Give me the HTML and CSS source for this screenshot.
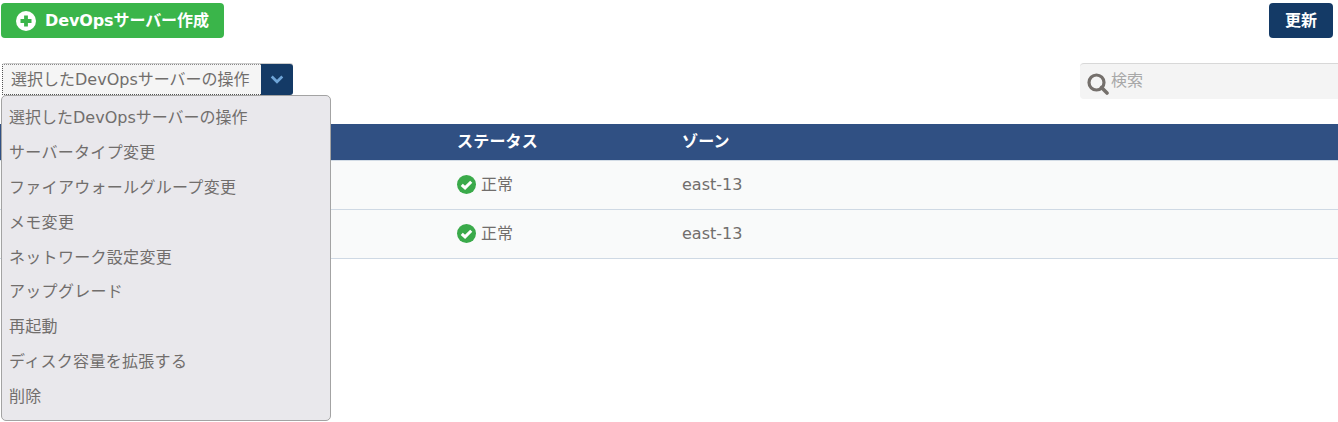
FILE: index.html
```html
<!DOCTYPE html>
<html lang="ja">
<head>
<meta charset="utf-8">
<title>DevOpsサーバー</title>
<link rel="stylesheet" href="styles.css">
</head>
<body>
<div class="toolbar">
  <button class="btn btn-create">
    <svg class="plus-icon" viewBox="0 0 20 20" width="20" height="20"><circle cx="10" cy="10" r="10" fill="#fff"/><path d="M10 4.500v11M4.500 10h11" stroke="#3ab54a" stroke-width="3.800"/></svg>
    <span class="create-label">DevOpsサーバー作成</span>
  </button>
  <button class="btn btn-refresh"><span>更新</span></button>
</div>
<div class="actions">
  <div class="select">
    <div class="select-label">選択したDevOpsサーバーの操作</div>
    <div class="select-arrow">
      <svg viewBox="0 0 12 8" width="14" height="9"><path d="M1.300 1.300 6 6l4.700-4.700" fill="none" stroke="#6fa5d8" stroke-width="2.400"/></svg>
    </div>
  </div>
  <div class="search">
    <svg viewBox="0 0 22 22" width="22" height="22"><circle cx="9.500" cy="9.500" r="7.500" fill="none" stroke="#75706c" stroke-width="3.200"/><path d="m14.500 14.500 5.500 5.500" stroke="#75706c" stroke-width="3.600" stroke-linecap="round"/></svg>
    <span class="search-text">検索</span>
  </div>
  <ul class="menu">
    <li class="menu-latin">選択したDevOpsサーバーの操作</li>
    <li>サーバータイプ変更</li>
    <li>ファイアウォールグループ変更</li>
    <li>メモ変更</li>
    <li>ネットワーク設定変更</li>
    <li>アップグレード</li>
    <li>再起動</li>
    <li>ディスク容量を拡張する</li>
    <li>削除</li>
  </ul>
</div>
<div class="table">
  <div class="row head"><div></div><div>ステータス</div><div>ゾーン</div></div>
  <div class="row body-row">
    <div></div>
    <div class="status"><svg viewBox="0 0 20 20" width="19" height="19"><circle cx="10" cy="10" r="10" fill="#3aaa4a"/><path d="m5 10.300 3.500 3.300 6.500-6.500" fill="none" stroke="#fff" stroke-width="3.200"/></svg><span class="status-text">正常</span></div>
    <div>east-13</div>
  </div>
  <div class="row body-row">
    <div></div>
    <div class="status"><svg viewBox="0 0 20 20" width="19" height="19"><circle cx="10" cy="10" r="10" fill="#3aaa4a"/><path d="m5 10.300 3.500 3.300 6.500-6.500" fill="none" stroke="#fff" stroke-width="3.200"/></svg><span class="status-text">正常</span></div>
    <div>east-13</div>
  </div>
</div>
</body>
</html>
```
FILE: styles.css
```css
* { box-sizing: border-box; }
html, body { margin: 0; padding: 0; }
body {
  width: 1338px;
  height: 422px;
  overflow: hidden;
  background: #fff;
  color: #716e6c;
  font-family: "DejaVu Sans", "Noto Sans CJK JP", sans-serif;
  font-size: 16px;
}
.toolbar {
  display: flex;
  justify-content: space-between;
  padding: 3px 5px 0 1px;
}
.btn {
  height: 35px;
  border: 0;
  border-radius: 4px;
  color: #fff;
  font-family: inherit;
  font-size: 16px;
  font-weight: bold;
  display: flex;
  align-items: center;
  padding: 0 0 3px;
}
.btn-create {
  width: 223px;
  background: #3ab54a;
  padding-left: 15px;
  gap: 9px;
}
.plus-icon { margin-top: 3px; }
.create-label { letter-spacing: -0.1px; }
.btn-refresh {
  width: 64px;
  background: #143a66;
  justify-content: center;
}
.actions {
  position: relative;
  display: flex;
  justify-content: space-between;
  align-items: flex-start;
  margin-top: 25px;
  padding-left: 2px;
}
.select {
  width: 291px;
  height: 32px;
  display: flex;
  border-radius: 3px;
  border: 1px solid #ccc;
  border-left: 0;
  border-bottom: 0;
  background: #f5f5f5;
}
.select-label {
  flex: 1;
  padding-left: 8px;
  line-height: 29px;
  white-space: nowrap;
  border: 1px dotted #555;
  border-top-color: #888;
  border-right: 0;
}
.select-arrow {
  width: 32px;
  background: #143a66;
  border-radius: 0 3px 3px 0;
  display: flex;
  align-items: center;
  justify-content: center;
  margin-right: -1px;
}
.search {
  width: 258px;
  height: 36px;
  display: flex;
  align-items: flex-start;
  background: #f4f4f4;
  border-top: 1px solid #d8d8d8;
  border-radius: 4px 0 0 4px;
  padding: 9px 0 0 7px;
  gap: 2px;
}
.search-text {
  color: #a8a8a8;
  line-height: 20px;
  margin-top: -2px;
}
.menu {
  position: absolute;
  left: 1px;
  top: 32px;
  width: 330px;
  height: 326px;
  margin: 0;
  padding: 5px 0 0 7px;
  list-style: none;
  background: #e9e8ec;
  border: 1px solid #a3a3a3;
  border-radius: 5px;
  z-index: 2;
}
.menu li {
  height: 34.900px;
  line-height: 34.900px;
  white-space: nowrap;
  letter-spacing: 0.3px;
}
.menu .menu-latin { letter-spacing: 0; }
.table {
  margin-top: 25px;
}
.row {
  display: grid;
  grid-template-columns: 457px 225px 1fr;
  align-items: center;
}
.head {
  height: 37px;
  background: #305083;
  color: #fff;
  font-weight: bold;
  border-bottom: 1px solid #d3dce6;
  padding-bottom: 5px;
}
.head div { letter-spacing: 0.2px; }
.body-row {
  height: 49px;
  background: #f9fafa;
  border-bottom: 1px solid #cfd9e4;
  padding-bottom: 1px;
}
.status {
  display: flex;
  align-items: center;
  gap: 5px;
}
.status-text { padding-bottom: 4px; }
```
